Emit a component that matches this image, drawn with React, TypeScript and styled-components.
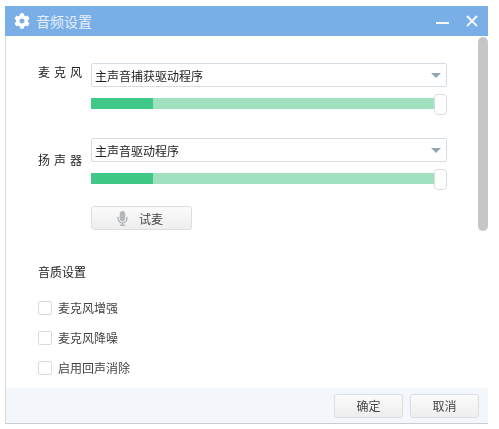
import styled, { createGlobalStyle } from "styled-components";
import { FaCog, FaMicrophone } from "react-icons/fa";

const GlobalStyle = createGlobalStyle`
    html, body {
        margin: 0;
        padding: 0;
        background: #fff;
    }
    body {
        font-family: "Noto Sans CJK SC", "Liberation Sans", sans-serif;
    }
`;

const Window = styled.div`
    display: flex;
    flex-direction: column;
    width: 483px;
    height: 418px;
    margin: 6px 0 0 5px;
    box-sizing: border-box;
    border-left: 1px solid #d6d8da;
    border-bottom: 1px solid #c9ccd0;
    filter: blur(0.5px);
`;

const TitleBar = styled.header`
    display: flex;
    align-items: center;
    height: 30px;
    margin-left: -1px;
    padding: 0 9px 0 9px;
    background: #7aaee6;
    color: #fff;
`;

const Title = styled.h1`
    flex: 1;
    margin: 0 0 0 6px;
    font-size: 14px;
    font-weight: 400;
    color: #e3eefa;
`;

const WinButton = styled.svg`
    width: 13px;
    height: 14px;
    margin-left: 17px;
    stroke: #f4f8fd;
    stroke-width: 2;
    fill: none;
`;

const Main = styled.div`
    flex: 1;
    display: flex;
    min-height: 0;
`;

const Content = styled.div`
    flex: 1;
    padding: 27px 30px 0 32px;
`;

const Devices = styled.div`
    display: flex;
    flex-direction: column;
    gap: 29px;
    margin-bottom: 22px;
`;

const Row = styled.div`
    display: flex;
`;

const Label = styled.div<{ $top: number }>`
    width: 53px;
    padding-top: ${(p) => p.$top}px;
    font-size: 12px;
    line-height: 16px;
    letter-spacing: 4px;
    color: #222;
`;

const Controls = styled.div`
    width: 356px;
`;

const Select = styled.div`
    display: flex;
    align-items: center;
    justify-content: space-between;
    height: 24px;
    box-sizing: border-box;
    padding: 0 5px 0 3px;
    border: 1px solid #d5dde4;
    border-radius: 2px;
    font-size: 12px;
    color: #222;
`;

const Arrow = styled.span`
    width: 0;
    height: 0;
    border-left: 5px solid transparent;
    border-right: 5px solid transparent;
    border-top: 5px solid #8fa6b8;
`;

const Slider = styled.div`
    position: relative;
    height: 11px;
    margin-top: 11px;
    width: 345px;
    background: #a0e2c0;
`;

const SliderFill = styled.div`
    height: 100%;
    background: #40c888;
`;

const Thumb = styled.div`
    position: absolute;
    top: -4px;
    left: 343px;
    width: 13px;
    height: 21px;
    box-sizing: border-box;
    background: #fff;
    border: 1px solid #dcdcdc;
    border-radius: 4px;
`;

const Button = styled.button<{ $width: number }>`
    display: inline-flex;
    align-items: center;
    justify-content: center;
    width: ${(p) => p.$width}px;
    height: 24px;
    padding: 0;
    border: 1px solid #dcdfe2;
    border-radius: 3px;
    background: linear-gradient(#fbfbfb, #eeeeee);
    font-family: inherit;
    font-size: 12px;
    color: #444;
`;

const TestButton = styled(Button)`
    justify-content: flex-start;
    margin-left: 53px;
    padding-left: 23px;
    gap: 9px;
    svg {
        color: #b4b8bb;
        font-size: 15px;
    }
`;

const SectionTitle = styled.h2`
    margin: 33px 0 21px;
    font-size: 12px;
    line-height: 16px;
    font-weight: 400;
    color: #222;
`;

const CheckRow = styled.label`
    display: flex;
    align-items: center;
    height: 14px;
    margin-bottom: 16px;
    gap: 6px;
    font-size: 12px;
    color: #444;
`;

const Box = styled.span`
    width: 14px;
    height: 14px;
    box-sizing: border-box;
    border: 1px solid #d8dadc;
    border-radius: 2px;
    background: #fff;
`;

const Scrollbar = styled.div`
    width: 10px;
    height: 194px;
    margin: 1px 0 0 0;
    border-radius: 5px;
    background: #c6c6c6;
`;

const Footer = styled.footer`
    display: flex;
    align-items: center;
    justify-content: flex-end;
    gap: 7px;
    height: 35px;
    padding-right: 9px;
    background: #f3f7fc;
`;

const devices = [
    { label: "麦克风", top: 1, name: "主声音捕获驱动程序" },
    { label: "扬声器", top: 14, name: "主声音驱动程序" },
];

const options = ["麦克风增强", "麦克风降噪", "启用回声消除"];

function App() {
    return (
        <>
            <GlobalStyle />
            <Window>
                <TitleBar>
                    <FaCog size={16} />
                    <Title>音频设置</Title>
                    <WinButton viewBox="0 0 13 14">
                        <path d="M0 9h13" />
                    </WinButton>
                    <WinButton viewBox="0 0 13 14">
                        <path d="M1 2l10 10M11 2L1 12" />
                    </WinButton>
                </TitleBar>
                <Main>
                    <Content>
                        <Devices>
                            {devices.map((d) => (
                                <Row key={d.label}>
                                    <Label $top={d.top}>{d.label}</Label>
                                    <Controls>
                                        <Select>
                                            {d.name}
                                            <Arrow />
                                        </Select>
                                        <Slider>
                                            <SliderFill style={{ width: "18%" }} />
                                            <Thumb />
                                        </Slider>
                                    </Controls>
                                </Row>
                            ))}
                        </Devices>
                        <TestButton $width={101}>
                            <FaMicrophone />
                            试麦
                        </TestButton>
                        <SectionTitle>音质设置</SectionTitle>
                        {options.map((o) => (
                            <CheckRow key={o}>
                                <Box />
                                {o}
                            </CheckRow>
                        ))}
                    </Content>
                    <Scrollbar />
                </Main>
                <Footer>
                    <Button $width={69}>确定</Button>
                    <Button $width={69}>取消</Button>
                </Footer>
            </Window>
        </>
    );
}

export default App;
